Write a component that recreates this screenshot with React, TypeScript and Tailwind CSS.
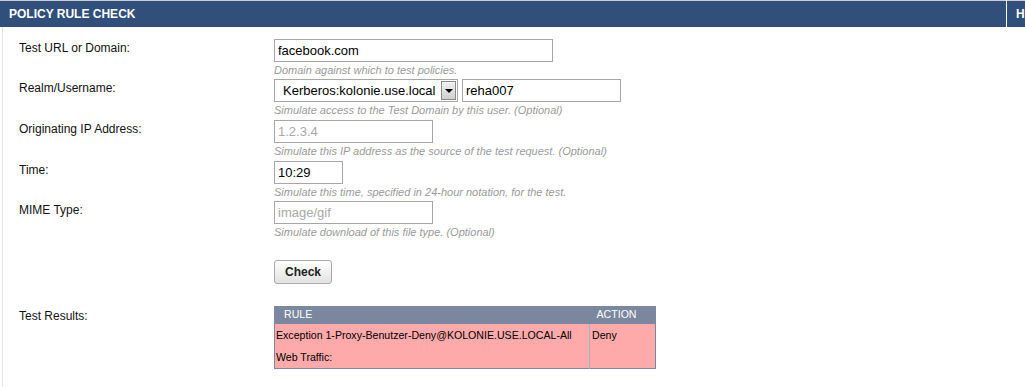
import React from 'react';

const HELP = 'text-[11px] italic leading-[17px] text-[#9a9a9a]';
const INPUT = 'h-[23px] border border-[#a7a7a7] bg-white px-[3px] text-[13px] leading-[21px]';

function FieldRow({ label, children, help, className = '' }: { label: string; children: React.ReactNode; help: string; className?: string }) {
  return (
    <div className={`flex ${className}`}>
      <div className="w-[255px] shrink-0 text-[12px] text-[#111]">{label}</div>
      <div className="flex flex-col">
        <div className="flex gap-[4px]">{children}</div>
        <div className={HELP}>{help}</div>
      </div>
    </div>
  );
}

export default function App() {
  return (
    <div className="flex h-[387px] w-[1025px] overflow-hidden bg-white font-['Liberation_Sans',Arial,sans-serif]">
      {/* Hauptbereich */}
      <div className="flex w-[1006px] shrink-0 flex-col">
        <div className="border-t border-[#c9cdd6] bg-[#304f7a]">
          <div className="flex h-[26px] items-center pl-[9px] text-[12px] font-bold text-white">POLICY RULE CHECK</div>
        </div>
        <div className="ml-[2px] flex flex-1 flex-col border-l border-[#dfe3ec] pl-[16px] pt-[12px]">
          <FieldRow label="Test URL or Domain:" help="Domain against which to test policies.">
            <div className={`${INPUT} w-[279px] text-black`}>facebook.com</div>
          </FieldRow>

          <FieldRow label="Realm/Username:" help="Simulate access to the Test Domain by this user. (Optional)" className="mb-[1px]">
            <div className="flex h-[23px] w-[184px] items-center justify-between border border-[#a7a7a7] bg-white pl-[8px] pr-[1px] text-[13px] text-black">
              <span>Kerberos:kolonie.use.local</span>
              <span className="flex h-[19px] w-[15px] items-center justify-center border border-[#8a8a8a] bg-gradient-to-b from-[#f2f2f2] to-[#cfcfcf]">
                <span className="h-0 w-0 border-x-[4px] border-t-[4px] border-x-transparent border-t-black" />
              </span>
            </div>
            <div className={`${INPUT} w-[159px] text-black`}>reha007</div>
          </FieldRow>

          <FieldRow label="Originating IP Address:" help="Simulate this IP address as the source of the test request. (Optional)" className="mb-[1px]">
            <div className={`${INPUT} w-[159px] text-[#a8a8a8]`}>1.2.3.4</div>
          </FieldRow>

          <FieldRow label="Time:" help="Simulate this time, specified in 24-hour notation, for the test.">
            <div className={`${INPUT} w-[69px] text-black`}>10:29</div>
          </FieldRow>

          <FieldRow label="MIME Type:" help="Simulate download of this file type. (Optional)">
            <div className={`${INPUT} w-[159px] text-[#a8a8a8]`}>image/gif</div>
          </FieldRow>

          <div className="ml-[255px] mt-[18px]">
            <button className="h-[24px] w-[58px] rounded-[3px] border border-[#a9a9a9] bg-gradient-to-b from-white to-[#e2e2e2] text-[12px] font-bold text-[#222]">
              Check
            </button>
          </div>

          <div className="mt-[22px] flex">
            <div className="w-[255px] shrink-0 pt-[1px] text-[12px] text-[#111]">Test Results:</div>
            <table className="w-[382px] border-collapse border border-[#7d889f] text-[10.6px]">
              <thead>
                <tr className="h-[17px] bg-[#7b879f] text-left font-normal text-white">
                  <th className="w-[315px] pl-[9px] font-normal">RULE</th>
                  <th className="pl-[7px] font-normal">ACTION</th>
                </tr>
              </thead>
              <tbody>
                <tr className="bg-[#ffaaaa] align-top text-black">
                  <td className="h-[45px] pl-[1px] pr-[2px] leading-[22px]">Exception 1-Proxy-Benutzer-Deny@KOLONIE.USE.LOCAL-All Web Traffic:</td>
                  <td className="border-l border-[#a8b0c8] pl-[2px] leading-[22px]">Deny</td>
                </tr>
              </tbody>
            </table>
          </div>
        </div>
      </div>

      {/* Seitenleiste (abgeschnitten) */}
      <div className="ml-[1px] min-w-0 flex-1 overflow-hidden">
        <div className="border-t border-[#c9cdd6] bg-[#304f7a]">
          <div className="flex h-[26px] items-center whitespace-nowrap pl-[9px] text-[12px] font-bold text-white">HELP</div>
        </div>
      </div>
    </div>
  );
}
